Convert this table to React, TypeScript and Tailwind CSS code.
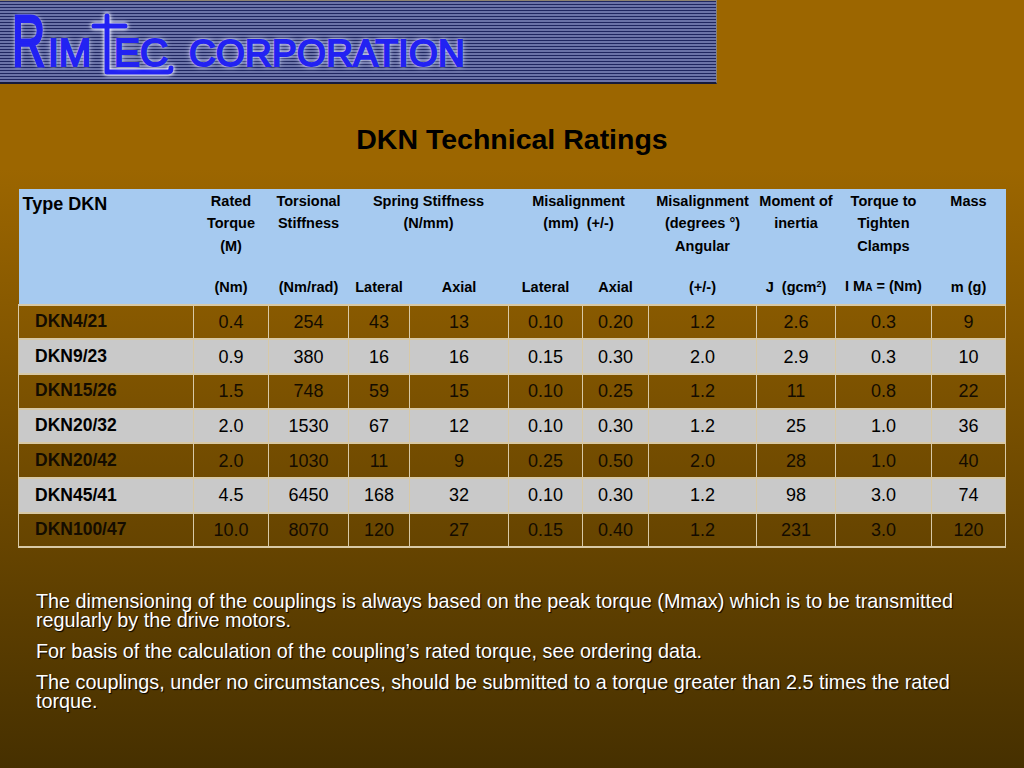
import React from "react";

const SANS = { fontFamily: '"Liberation Sans", Arial, sans-serif' };

type Row = { type: string; values: string[] };

const ROWS: Row[] = [
  { type: "DKN4/21", values: ["0.4", "254", "43", "13", "0.10", "0.20", "1.2", "2.6", "0.3", "9"] },
  { type: "DKN9/23", values: ["0.9", "380", "16", "16", "0.15", "0.30", "2.0", "2.9", "0.3", "10"] },
  { type: "DKN15/26", values: ["1.5", "748", "59", "15", "0.10", "0.25", "1.2", "11", "0.8", "22"] },
  { type: "DKN20/32", values: ["2.0", "1530", "67", "12", "0.10", "0.30", "1.2", "25", "1.0", "36"] },
  { type: "DKN20/42", values: ["2.0", "1030", "11", "9", "0.25", "0.50", "2.0", "28", "1.0", "40"] },
  { type: "DKN45/41", values: ["4.5", "6450", "168", "32", "0.10", "0.30", "1.2", "98", "3.0", "74"] },
  { type: "DKN100/47", values: ["10.0", "8070", "120", "27", "0.15", "0.40", "1.2", "231", "3.0", "120"] },
];

const WIDTHS = [175, 75, 80, 61, 99, 74, 66, 108, 79, 96, 74];

function Logo() {
  const glow =
    "text-[#2222f2] [-webkit-text-stroke:2px_#2222f2] [text-shadow:0_0_2px_#ffffff,0_0_3px_#ffffff,0_0_6px_#dfe4ff]";
  return (
    <div className="relative h-[84px] w-[717px] border-t border-r border-[#8d8270] border-b-2 border-b-[#151a3c] bg-[repeating-linear-gradient(to_bottom,#1f2660_0px,#1f2660_1.5px,#6b73a8_1.5px,#6b73a8_3px)]">
      <span className={`absolute left-[12px] top-[4px] text-[72px] leading-none origin-left scale-x-[0.64] inline-block text-[#2222f2] [-webkit-text-stroke:3px_#2222f2] [text-shadow:0_0_2px_#ffffff,0_0_3px_#ffffff,0_0_6px_#dfe4ff]`} style={SANS}>
        R
      </span>
      <span className={`absolute left-[48px] top-[32px] text-[39px] leading-none ${glow}`} style={SANS}>
        IM
      </span>
      <svg className="absolute left-0 top-0 [filter:drop-shadow(0_0_1.5px_#ffffff)_drop-shadow(0_0_2px_#e4e8ff)]" width="717" height="84" viewBox="0 0 717 84">
        <g stroke="#2222f2" strokeWidth="5" fill="none" strokeLinecap="round" strokeLinejoin="round">
          <path d="M107 15 L107 71 L168 71 Q171 71 171 67" />
          <path d="M94 25 L125 25" />
        </g>
      </svg>
      <span className={`absolute left-[114px] top-[32px] text-[39px] leading-none ${glow}`} style={SANS}>
        EC
      </span>
      <span className={`absolute left-[189px] top-[34px] text-[37px] leading-none tracking-[0.3px] ${glow}`} style={SANS}>
        CORPORATION
      </span>
    </div>
  );
}

function HeaderTable() {
  const th = "align-top pt-[1px] text-center font-bold text-[14.5px] leading-[22.5px] text-black whitespace-nowrap";
  const unit = "align-middle text-center font-bold text-[14.5px] leading-[22.5px] text-black whitespace-nowrap";
  return (
    <thead className="bg-[#a6caf0]">
      <tr className="h-[82px]">
        <th rowSpan={2} className="align-top pt-[3px] pl-[4px] text-left font-bold text-[18px] leading-[24px] text-black">
          Type DKN
        </th>
        <th className={th}>
          Rated
          <br />
          Torque
          <br />
          (M)
        </th>
        <th className={th}>
          Torsional
          <br />
          Stiffness
        </th>
        <th colSpan={2} className={th}>
          Spring Stiffness
          <br />
          (N/mm)
        </th>
        <th colSpan={2} className={th}>
          Misalignment
          <br />
          (mm)&nbsp; (+/-)
        </th>
        <th className={th}>
          Misalignment
          <br />
          (degrees °)
          <br />
          Angular
        </th>
        <th className={th}>
          Moment of
          <br />
          inertia
        </th>
        <th className={th}>
          Torque to
          <br />
          Tighten
          <br />
          Clamps
        </th>
        <th className={th}>Mass</th>
      </tr>
      <tr className="h-[34px]">
        <th className={unit}>(Nm)</th>
        <th className={unit}>(Nm/rad)</th>
        <th className={unit}>Lateral</th>
        <th className={unit}>Axial</th>
        <th className={unit}>Lateral</th>
        <th className={unit}>Axial</th>
        <th className={unit}>(+/-)</th>
        <th className={unit}>
          J&nbsp; (gcm<sup className="text-[9px]">2</sup>)
        </th>
        <th className={unit}>
          I M<span className="text-[10px] font-bold">A</span> = (Nm)
        </th>
        <th className={unit}>m (g)</th>
      </tr>
    </thead>
  );
}

export default function App() {
  return (
    <div className="w-[1024px] h-[768px] overflow-hidden bg-[linear-gradient(to_bottom,#9c6600_0%,#9c6600_22%,#463000_100%)]">
      <Logo />

      <h1 className="mt-[41px] text-center text-[28.5px] leading-none font-bold text-black" style={SANS}>
        DKN Technical Ratings
      </h1>

      <table className="mt-[35px] ml-[18px] w-[987px] table-fixed border-collapse" style={SANS}>
        <colgroup>
          {WIDTHS.map((w, i) => (
            <col key={i} style={{ width: w }} />
          ))}
        </colgroup>
        <HeaderTable />
        <tbody>
          {ROWS.map((row, i) => {
            const gray = i % 2 === 1;
            return (
              <tr key={row.type} className={gray ? "h-[34.7px] bg-[#c9c9c9] text-black" : "h-[34.7px] text-[#140c00]"}>
                <td className="border-x border-y-2 border-[#d8c9a6] pl-[16px] text-left font-bold text-[17.5px] leading-none">
                  {row.type}
                </td>
                {row.values.map((v, j) => (
                  <td key={j} className="border-x border-y-2 border-[#d8c9a6] text-center text-[18px] leading-none">
                    {v}
                  </td>
                ))}
              </tr>
            );
          })}
        </tbody>
      </table>

      <div className="mt-[44px] ml-[36px] w-[940px] text-white text-[19.8px] leading-[19px] [text-shadow:1px_1px_1px_#000000]" style={SANS}>
        <p>
          The dimensioning of the couplings is always based on the peak torque (Mmax) which is to be transmitted regularly by the drive motors.
        </p>
        <p className="mt-[12px]">For basis of the calculation of the coupling’s rated torque, see ordering data.</p>
        <p className="mt-[12px]">
          The couplings, under no circumstances, should be submitted to a torque greater than 2.5 times the rated torque.
        </p>
      </div>
    </div>
  );
}
